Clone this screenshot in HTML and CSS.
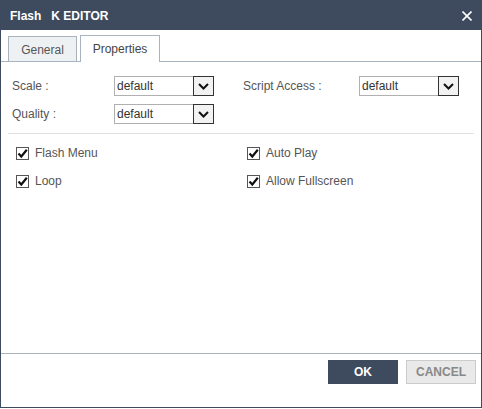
FILE: index.html
```html
<!DOCTYPE html>
<html>
<head>
<meta charset="utf-8">
<link rel="stylesheet" href="styles.css">
</head>
<body>
<div class="dialog">
  <div class="header">
    <span class="title">Flash</span><span class="title title-sub">K EDITOR</span>
    <svg class="close" width="10" height="10" viewBox="0 0 10 10"><path d="M0.5 0.5 L9.5 9.5 M9.5 0.5 L0.5 9.5" stroke="#fff" stroke-width="1.6"/></svg>
  </div>
  <div class="tabs">
    <div class="tab">General</div>
    <div class="tab active">Properties</div>
  </div>
  <div class="content">
    <div class="fields">
      <div class="field">
        <span class="label">Scale :</span>
        <div class="select"><span class="value">default</span><span class="btn"><svg width="11" height="7" viewBox="0 0 11 7"><path d="M1 1 L5.5 5.5 L10 1" fill="none" stroke="#111" stroke-width="2"/></svg></span></div>
      </div>
      <div class="field right">
        <span class="label">Script Access :</span>
        <div class="select"><span class="value">default</span><span class="btn"><svg width="11" height="7" viewBox="0 0 11 7"><path d="M1 1 L5.5 5.5 L10 1" fill="none" stroke="#111" stroke-width="2"/></svg></span></div>
      </div>
      <div class="field">
        <span class="label">Quality :</span>
        <div class="select"><span class="value">default</span><span class="btn"><svg width="11" height="7" viewBox="0 0 11 7"><path d="M1 1 L5.5 5.5 L10 1" fill="none" stroke="#111" stroke-width="2"/></svg></span></div>
      </div>
    </div>
    <div class="divider"></div>
    <div class="checks">
      <label class="check"><span class="box"><svg width="11" height="11" viewBox="0 0 11 11"><path d="M1.5 5.5 L4.3 8.5 L9.8 1.8" fill="none" stroke="#111" stroke-width="2.2"/></svg></span>Flash Menu</label>
      <label class="check"><span class="box"><svg width="11" height="11" viewBox="0 0 11 11"><path d="M1.5 5.5 L4.3 8.5 L9.8 1.8" fill="none" stroke="#111" stroke-width="2.2"/></svg></span>Auto Play</label>
      <label class="check"><span class="box"><svg width="11" height="11" viewBox="0 0 11 11"><path d="M1.5 5.5 L4.3 8.5 L9.8 1.8" fill="none" stroke="#111" stroke-width="2.2"/></svg></span>Loop</label>
      <label class="check"><span class="box"><svg width="11" height="11" viewBox="0 0 11 11"><path d="M1.5 5.5 L4.3 8.5 L9.8 1.8" fill="none" stroke="#111" stroke-width="2.2"/></svg></span>Allow Fullscreen</label>
    </div>
  </div>
  <div class="footer">
    <button class="button ok">OK</button>
    <button class="button cancel">CANCEL</button>
  </div>
</div>
</body>
</html>
```

FILE: styles.css
```css
html, body {
  margin: 0;
  padding: 0;
  background: #fff;
}
body {
  font-family: "Liberation Sans", Arial, sans-serif;
  font-size: 12px;
  color: #555;
}
.dialog {
  width: 482px;
  height: 408px;
  box-sizing: border-box;
  border: 1px solid #3e4b5e;
  display: flex;
  flex-direction: column;
  background: #fff;
}
.header {
  height: 29px;
  background: #3e4b5e;
  display: flex;
  align-items: center;
  padding-left: 9px;
  position: relative;
  flex: none;
}
.title {
  color: #fff;
  font-weight: bold;
  font-size: 12px;
  line-height: 14px;
}
.title-sub {
  margin-left: 10px;
}
.close {
  margin-left: auto;
  margin-right: 9px;
  margin-top: 1px;
}
.tabs {
  flex: none;
  display: flex;
  align-items: flex-end;
  padding: 4px 0 0 7px;
  height: 27px;
  border-bottom: 1px solid #a9b3be;
  gap: 3px;
}
.tab {
  box-sizing: border-box;
  height: 25px;
  width: 69px;
  border: 1px solid #a9b3be;
  border-bottom: none;
  background: #eef1f4;
  color: #555;
  display: flex;
  align-items: center;
  justify-content: center;
  padding-top: 2px;
}
.tab.active {
  height: 27px;
  width: 80px;
  background: #fff;
  margin-bottom: -1px;
  padding-top: 0;
  color: #444;
}
.content {
  flex: 1;
  padding: 14px 7px 0 7px;
}
.fields {
  display: grid;
  grid-template-columns: 231px 1fr;
  row-gap: 8px;
  padding-left: 4px;
}
.field {
  display: flex;
  align-items: center;
  height: 20px;
}
.field .label {
  width: 102px;
  flex: none;
}
.field.right .label {
  width: 116px;
}
.select {
  display: flex;
  width: 100px;
  height: 20px;
  box-sizing: border-box;
}
.select .value {
  flex: 1;
  box-sizing: border-box;
  border: 1px solid #b0b0b0;
  border-right: none;
  color: #333;
  padding-left: 2px;
  line-height: 18px;
}
.select .btn {
  width: 21px;
  height: 20px;
  box-sizing: border-box;
  border: 1px solid #333;
  background: #f2f2f2;
  display: flex;
  align-items: center;
  justify-content: center;
}
.divider {
  height: 1px;
  background: #e0e0e0;
  margin-top: 9px;
}
.checks {
  display: grid;
  grid-template-columns: 231px 1fr;
  row-gap: 8px;
  padding: 9px 0 0 8px;
}
.check {
  display: flex;
  align-items: center;
  height: 20px;
}
.box {
  width: 13px;
  height: 13px;
  box-sizing: border-box;
  border: 1px solid #555;
  background: #fff;
  display: flex;
  align-items: center;
  justify-content: center;
  margin-right: 6px;
  flex: none;
}
.footer {
  flex: none;
  height: 54px;
  box-sizing: border-box;
  border-top: 1px solid #a9b3be;
  display: flex;
  justify-content: flex-end;
  align-items: flex-start;
  gap: 8px;
  padding: 6px 5px 0 0;
}
.button {
  width: 70px;
  height: 24px;
  font-family: "Liberation Sans", Arial, sans-serif;
  font-size: 12px;
  font-weight: bold;
  padding: 0;
  margin: 0;
  box-sizing: border-box;
}
.ok {
  background: #3e4b5e;
  border: 1px solid #3e4b5e;
  color: #fff;
}
.cancel {
  background: #e9e9e9;
  border: 1px solid #cccccc;
  color: #888;
}
```
